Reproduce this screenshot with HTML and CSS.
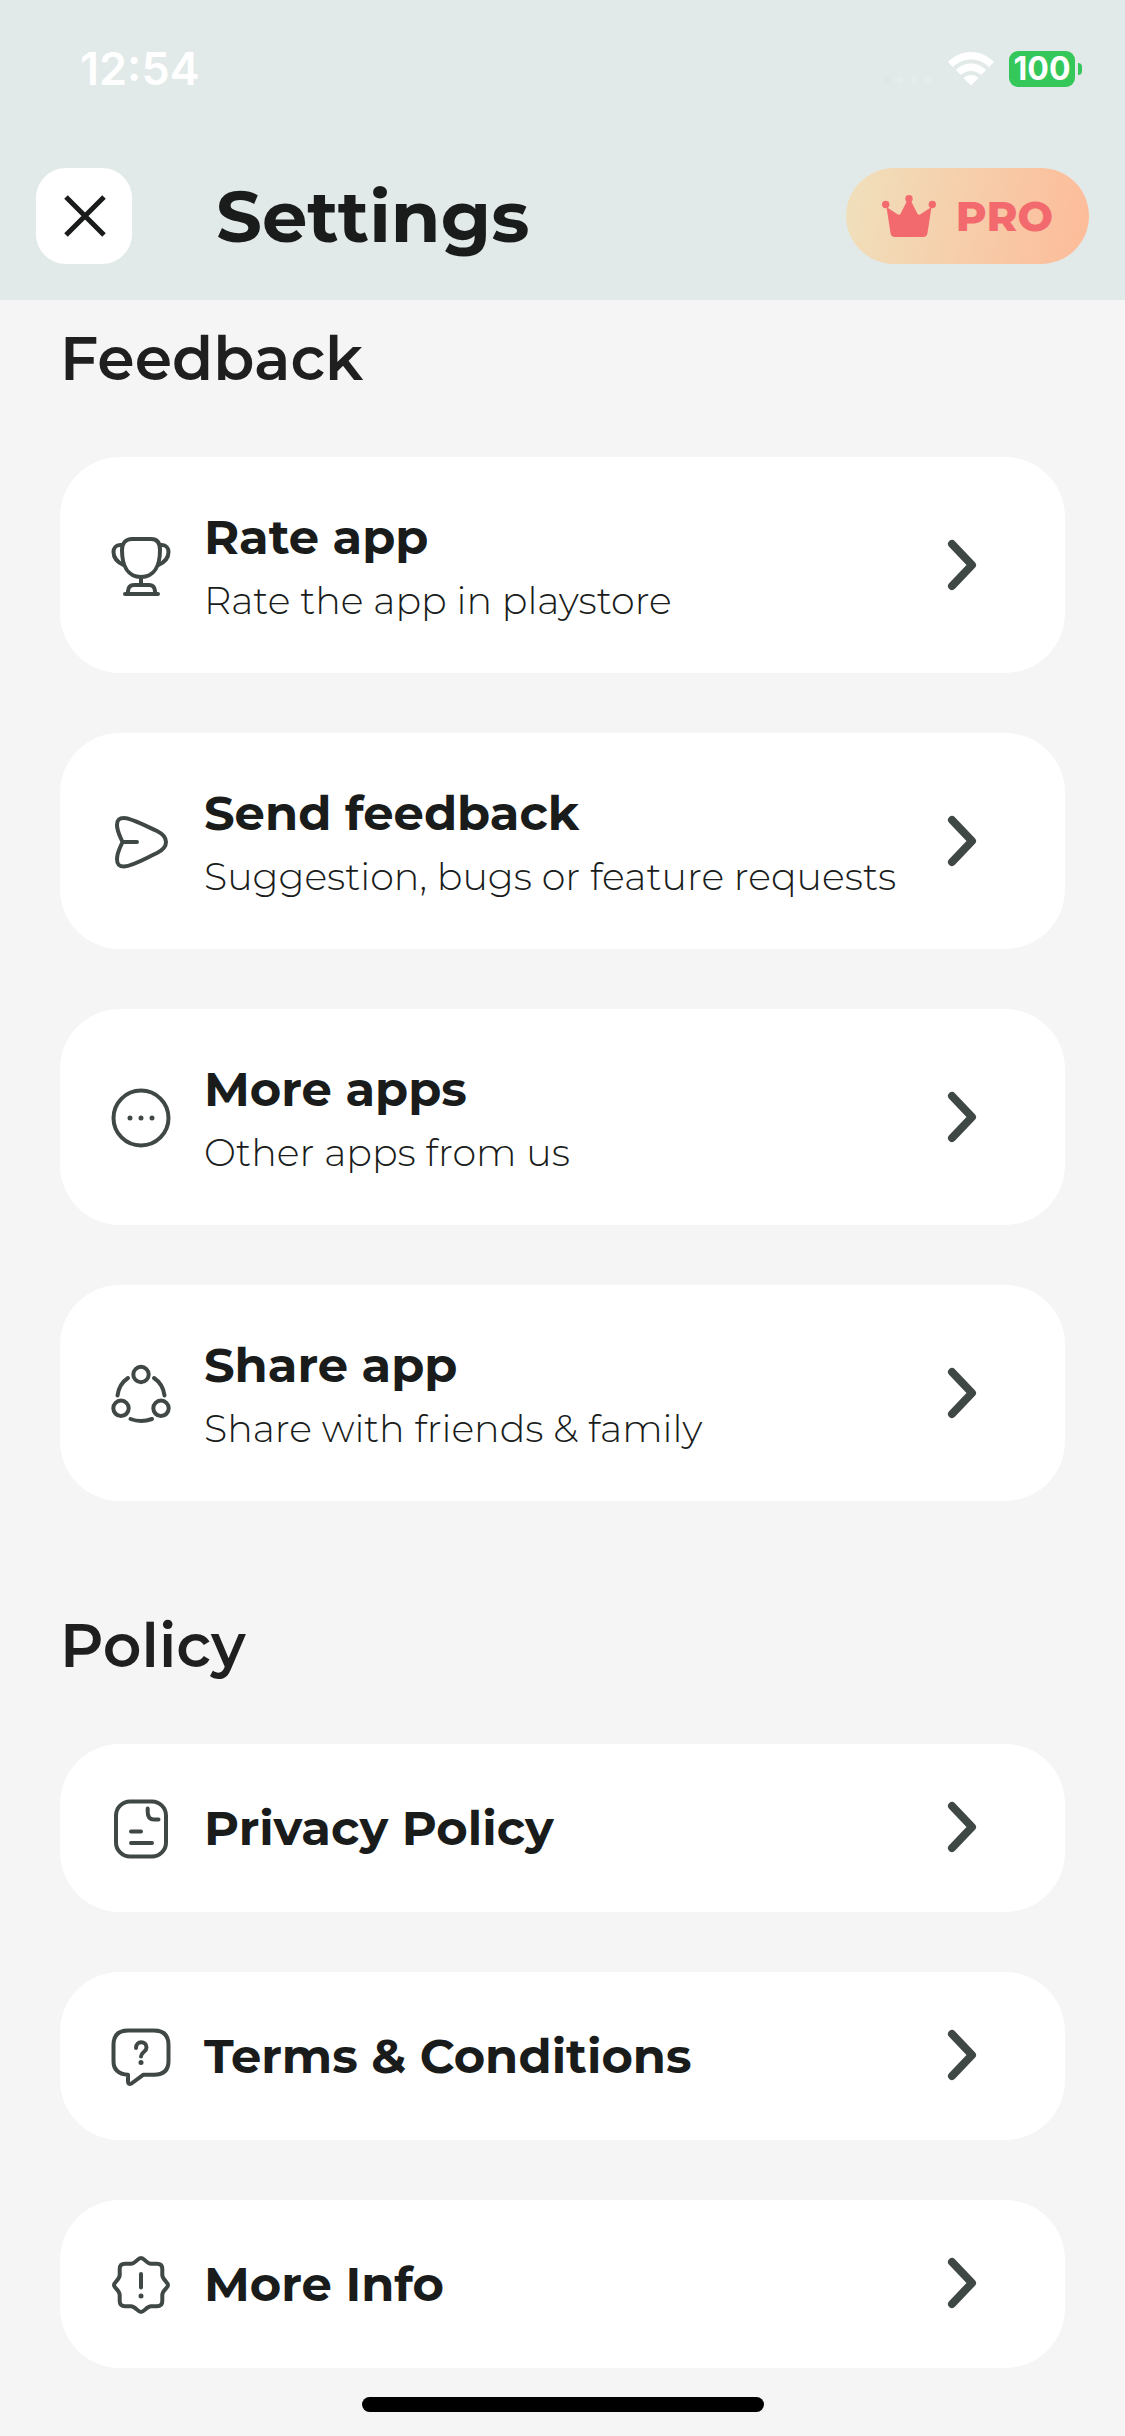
FILE: index.html
```html
<!DOCTYPE html>
<html lang="en">
<head>
    <meta charset="UTF-8">
    <meta name="viewport" content="width=device-width, initial-scale=1.0">
    <title>Settings</title>
    <link rel="stylesheet" href="styles.css">
</head>
<body>

    <header>
        <div class="status-bar">
            <span class="time">12:54</span>
            <div class="status-icons">
                <svg class="signal" viewBox="0 0 50 36">
                    <circle cx="4" cy="29" r="3.500" fill="#dfe6e5"/>
                    <circle cx="17" cy="29" r="3.500"/>
                    <circle cx="31" cy="29" r="3.500"/>
                    <circle cx="45" cy="29" r="3.500"/>
                </svg>
                <svg class="wifi" viewBox="0 0 46 34">
                    <path d="M23 0C32 0 40 4 46 10L41 15C36 10 30 7.500 23 7.500S10 10 5 15L0 10C6 4 14 0 23 0Z"/>
                    <path d="M23 11.500C29 11.500 34 14 38 18L33 23C30 20.500 27 19 23 19S16 20.500 13 23L8 18C12 14 17 11.500 23 11.500Z"/>
                    <path d="M23 23C26 23 28.500 24 30.500 26L23 33.500L15.500 26C17.500 24 20 23 23 23Z"/>
                </svg>
                <div class="battery">
                    <span class="level">100</span>
                    <span class="nub"></span>
                </div>
            </div>
        </div>
        <div class="title-bar">
            <button class="close" aria-label="Close">
                <svg viewBox="0 0 48 48"><path d="M6 5L44 43M44 5L6 43"/></svg>
            </button>
            <h1>Settings</h1>
            <button class="pro">
                <svg viewBox="0 0 54 42">
                    <circle cx="3.700" cy="9.500" r="3.700"/>
                    <circle cx="27" cy="3.700" r="3.700"/>
                    <circle cx="50.300" cy="9.500" r="3.700"/>
                    <path d="M4.500 12L15.500 19.300Q17.500 20.500 18.700 18.500L25 6H29L35.300 18.500Q36.500 20.500 38.500 19.300L49.500 12L45.500 38Q45 42 41 42H13Q9 42 8.500 38Z"/>
                </svg>
                PRO
            </button>
        </div>
    </header>

    <main>
        <section>
            <h2>Feedback</h2>
            <a class="card" href="#">
                <svg class="icon" viewBox="0 0 60 60">
                    <path d="M21 3H40C46 3 49 7 49 14C49 30 43 41 30 41S11 30 11 14C11 7 15 3 21 3Z"/>
                    <path d="M11 9H9C5 9 2.500 12 2.500 16C2.500 22 6 26 12.500 29M49 9H51C55 9 57.500 12 57.500 16C57.500 22 54 26 47.500 29"/>
                    <path d="M30 41V49M17 57V55Q17.500 49 23 49H38Q43.500 49 44 55V57M14 58H47"/>
                </svg>
                <div class="text">
                    <h3>Rate app</h3>
                    <p>Rate the app in playstore</p>
                </div>
                <svg class="arrow" viewBox="0 0 60 60"><path d="M20 8L40 29L20 50"/></svg>
            </a>
            <a class="card" href="#">
                <svg class="icon" viewBox="0 0 60 60">
                    <path d="M11.500 30C8 22 6 19 6 13C6 8 8 6 13 6C20 6 35 14 46 19C58 25 58 35 46 41C35 46 22 54 13 54.500C8 54.500 6 53 6 47C6 41 8 38 11.500 30ZM11.500 30H26"/>
                </svg>
                <div class="text">
                    <h3>Send feedback</h3>
                    <p>Suggestion, bugs or feature requests</p>
                </div>
                <svg class="arrow" viewBox="0 0 60 60"><path d="M20 8L40 29L20 50"/></svg>
            </a>
            <a class="card" href="#">
                <svg class="icon" viewBox="0 0 60 60">
                    <circle cx="30" cy="30" r="27.500"/>
                    <path class="dots" d="M19 30h0M30 30h0M41 30h0"/>
                </svg>
                <div class="text">
                    <h3>More apps</h3>
                    <p>Other apps from us</p>
                </div>
                <svg class="arrow" viewBox="0 0 60 60"><path d="M20 8L40 29L20 50"/></svg>
            </a>
            <a class="card" href="#">
                <svg class="icon" viewBox="0 0 60 60">
                    <circle cx="30" cy="10.500" r="7.700"/>
                    <circle cx="10" cy="44.300" r="7.700"/>
                    <circle cx="50" cy="44.300" r="7.700"/>
                    <path d="M17 14Q8 20 6.500 31.500M43 14Q52 20 53.500 31.500M19.500 55Q30 59 41 55"/>
                </svg>
                <div class="text">
                    <h3>Share app</h3>
                    <p>Share with friends &amp; family</p>
                </div>
                <svg class="arrow" viewBox="0 0 60 60"><path d="M20 8L40 29L20 50"/></svg>
            </a>
        </section>

        <section>
            <h2>Policy</h2>
            <a class="card small" href="#">
                <svg class="icon" viewBox="0 -1 60 60">
                    <rect x="5" y="2.500" width="50" height="55" rx="14"/>
                    <path d="M36.700 9.500V13Q36.700 20.500 43 20.500H47.500M20 32.500H30M20 44H41"/>
                </svg>
                <div class="text">
                    <h3>Privacy Policy</h3>
                </div>
                <svg class="arrow" viewBox="0 0 60 60"><path d="M20 8L40 29L20 50"/></svg>
            </a>
            <a class="card small" href="#">
                <svg class="icon" viewBox="0 -1 60 60">
                    <path d="M17 3.500H43Q57.500 3.500 57.500 18V34Q57.500 47.700 43 47.700H32.500L20.500 56.500Q17 58 17 54.500V47.700Q2.500 47 2.500 34V18Q2.500 3.500 17 3.500Z"/>
                    <path d="M25 21C25 13 35.500 13.500 35.500 20.500C35.500 25 30 25 30 29.500"/>
                    <path class="dots" d="M30 35.500h0"/>
                </svg>
                <div class="text">
                    <h3>Terms &amp; Conditions</h3>
                </div>
                <svg class="arrow" viewBox="0 0 60 60"><path d="M20 8L40 29L20 50"/></svg>
            </a>
            <a class="card small" href="#">
                <svg class="icon" viewBox="0 -1 60 60">
                    <path d="M30 3C33.500 3 35.500 8.700 40 8.700H46Q51.300 8.700 51.300 14V20C51.300 24.500 57 27 57 30S51.300 35.500 51.300 40V46Q51.300 51.300 46 51.300H40C35.500 51.300 33.500 57 30 57S24.500 51.300 20 51.300H14Q8.700 51.300 8.700 46V40C8.700 35.500 3 33 3 30S8.700 24.500 8.700 20V14Q8.700 8.700 14 8.700H20C24.500 8.700 26.500 3 30 3Z"/>
                    <path d="M30 19V32.500"/>
                    <path class="dots" d="M30 41h0"/>
                </svg>
                <div class="text">
                    <h3>More Info</h3>
                </div>
                <svg class="arrow" viewBox="0 0 60 60"><path d="M20 8L40 29L20 50"/></svg>
            </a>
        </section>
    </main>

    <div class="home-indicator"></div>

</body>
</html>
```
FILE: styles.css
```css
* {
    box-sizing: border-box;
}
body {
    font-family: Montserrat, Inter, sans-serif;
    background-color: #f5f5f5;
    color: #191c1b;
    margin: 0;
}
h1, h2, h3, p {
    margin: 0;
}
svg {
    display: block;
    flex: none;
    overflow: visible;
}

/* Header */
header {
    position: sticky;
    top: 0;
    background: #e2eae9;
    padding: 47px 36px 36px;
}
.status-bar {
    display: flex;
    justify-content: space-between;
    align-items: center;
    height: 44px;
    padding: 0 7px 0 44px;
    margin-bottom: 77px;
    font-family: Inter, sans-serif;
    color: #fff;
}
.time {
    font-size: 45px;
    font-weight: 600;
    line-height: 44px;
}
.status-icons {
    display: flex;
    align-items: center;
    gap: 15px;
}
.signal {
    width: 50px;
    height: 36px;
    fill: #e6eceb;
}
.wifi {
    width: 46px;
    height: 34px;
    fill: #fff;
}
.battery {
    display: flex;
    align-items: center;
    gap: 3px;
}
.level {
    width: 66px;
    background: #34c759;
    border-radius: 9px;
    font-size: 32px;
    font-weight: 700;
    line-height: 36px;
    text-align: center;
}
.nub {
    width: 4px;
    height: 12px;
    background: #34c759;
    border-radius: 0 6px 6px 0;
}
.title-bar {
    display: flex;
    align-items: center;
}
h1 {
    flex: 1;
    margin-left: 84px;
    font-size: 72px;
    font-weight: 700;
    line-height: 74px;
}
button {
    display: flex;
    align-items: center;
    height: 96px;
    border: none;
    font-family: inherit;
    cursor: pointer;
}
.close {
    justify-content: center;
    width: 96px;
    padding: 0;
    background: #fff;
    border-radius: 30px;
}
.close svg {
    width: 48px;
    height: 48px;
    stroke: #191c1b;
    stroke-width: 5;
}
.pro {
    gap: 20px;
    padding: 0 36px;
    border-radius: 48px;
    background: linear-gradient(100deg, #f0e0bc, #fdbb99);
    color: #f26a6e;
    font-size: 42px;
    font-weight: 800;
}
.pro svg {
    width: 54px;
    height: 42px;
    fill: #f26a6e;
}

/* Settings list */
main {
    padding: 23px 60px 68px;
}
section {
    display: flex;
    flex-direction: column;
    gap: 60px;
}
section + section {
    margin-top: 109px;
}
h2 {
    margin-bottom: 2px;
    font-size: 60px;
    font-weight: 600;
    line-height: 72px;
    color: #1f1f1f;
}
.card {
    display: flex;
    align-items: center;
    gap: 33px;
    padding: 50px 73px 48px 51px;
    background: #fff;
    border-radius: 60px;
    color: inherit;
    text-decoration: none;
}
.small {
    padding-top: 54px;
    padding-bottom: 54px;
}
.text {
    display: flex;
    flex-direction: column;
    gap: 10px;
    flex: 1;
}
h3 {
    font-size: 48px;
    font-weight: 700;
    line-height: 60px;
}
p {
    font-size: 38px;
    font-weight: 300;
    line-height: 48px;
    white-space: nowrap;
}
.icon, .arrow {
    width: 60px;
    height: 60px;
    fill: none;
    stroke: #404846;
    stroke-width: 4;
    stroke-linecap: round;
    stroke-linejoin: round;
}
.arrow {
    stroke-width: 8;
}
.dots {
    stroke-width: 5;
}

.home-indicator {
    position: fixed;
    bottom: 24px;
    left: 50%;
    width: 402px;
    height: 15px;
    transform: translateX(-50%);
    background: #000;
    border-radius: 8px;
}
```
